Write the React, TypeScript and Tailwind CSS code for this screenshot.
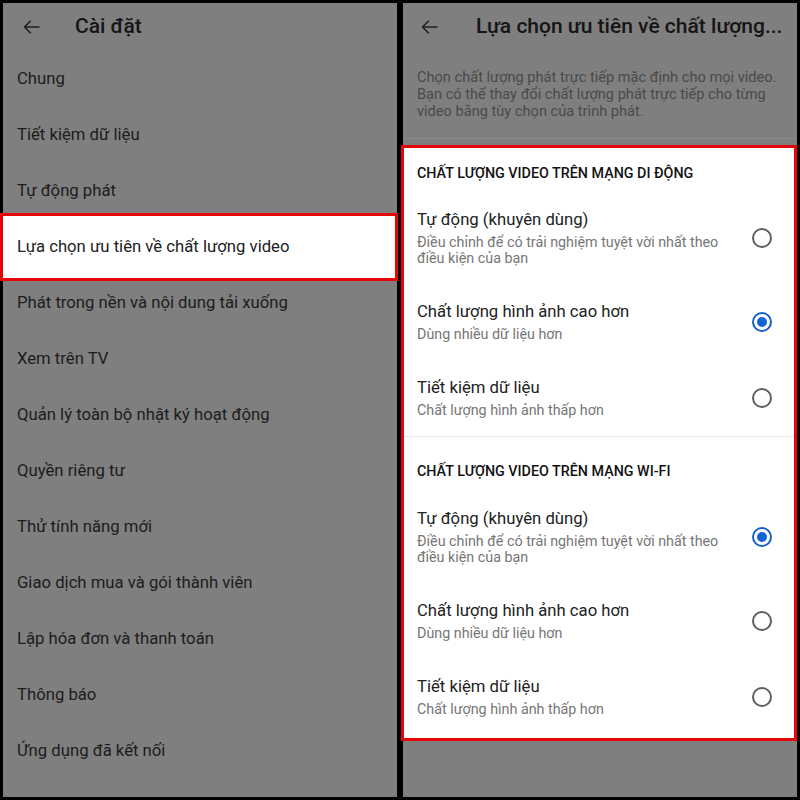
import React from 'react';

const font = { fontFamily: 'Roboto, "Noto Sans", sans-serif' };

const menuItems = [
  'Chung',
  'Tiết kiệm dữ liệu',
  'Tự động phát',
  'Lựa chọn ưu tiên về chất lượng video',
  'Phát trong nền và nội dung tải xuống',
  'Xem trên TV',
  'Quản lý toàn bộ nhật ký hoạt động',
  'Quyền riêng tư',
  'Thử tính năng mới',
  'Giao dịch mua và gói thành viên',
  'Lập hóa đơn và thanh toán',
  'Thông báo',
  'Ứng dụng đã kết nối',
];

type Option = { title: string; sub: string[]; checked: boolean };

const mobile: Option[] = [
  { title: 'Tự động (khuyên dùng)', sub: ['Điều chỉnh để có trải nghiệm tuyệt vời nhất theo', 'điều kiện của bạn'], checked: false },
  { title: 'Chất lượng hình ảnh cao hơn', sub: ['Dùng nhiều dữ liệu hơn'], checked: true },
  { title: 'Tiết kiệm dữ liệu', sub: ['Chất lượng hình ảnh thấp hơn'], checked: false },
];

const wifi: Option[] = [
  { title: 'Tự động (khuyên dùng)', sub: ['Điều chỉnh để có trải nghiệm tuyệt vời nhất theo', 'điều kiện của bạn'], checked: true },
  { title: 'Chất lượng hình ảnh cao hơn', sub: ['Dùng nhiều dữ liệu hơn'], checked: false },
  { title: 'Tiết kiệm dữ liệu', sub: ['Chất lượng hình ảnh thấp hơn'], checked: false },
];

function BackArrow() {
  return (
    <svg width="20" height="20" viewBox="0 0 24 24" fill="none" stroke="#1e1e1e" strokeWidth="1.8" className="shrink-0">
      <path d="M21 12H3.5" />
      <path d="M10.5 4.5L3 12l7.5 7.5" />
    </svg>
  );
}

function Radio({ checked }: { checked: boolean }) {
  return checked ? (
    <div className="w-[20px] h-[20px] rounded-full border-2 border-[#1660c9] flex items-center justify-center shrink-0">
      <div className="w-[10px] h-[10px] rounded-full bg-[#1263d6]" />
    </div>
  ) : (
    <div className="w-[20px] h-[20px] rounded-full border-2 border-[#5f5f5f] shrink-0" />
  );
}

function OptionRow({ opt }: { opt: Option }) {
  return (
    <div className="flex items-center pl-[13px] pr-[22px] pt-[17px] pb-[18px]">
      <div className="flex-1">
        <div className="text-[16.7px] leading-[22px] text-[#212121]">{opt.title}</div>
        <div className="mt-[3px] text-[14.3px] leading-[16px] text-[#767676]">
          {opt.sub.map((s) => (
            <div key={s}>{s}</div>
          ))}
        </div>
      </div>
      <Radio checked={opt.checked} />
    </div>
  );
}

export default function App() {
  return (
    <div className="w-[800px] h-[800px] bg-black p-[3px] flex gap-[6px] overflow-hidden" style={font}>
      {/* left: settings list */}
      <div className="w-[394px] shrink-0 h-full bg-[#7f7f7f] flex flex-col">
        <div className="h-[48px] flex items-center pl-[19px] shrink-0">
          <BackArrow />
          <span className="ml-[33px] text-[21px] font-medium text-[#151515]">Cài đặt</span>
        </div>
        {menuItems.map((item, i) =>
          i === 3 ? (
            <div
              key={item}
              className="relative z-10 -ml-[3px] -mr-[1px] -my-[6px] h-[68px] bg-white border-[3px] border-[#e5060a] flex items-center pl-[14px] text-[16.7px] text-[#222]"
            >
              {item}
            </div>
          ) : (
            <div key={item} className="h-[56px] flex items-center pl-[14px] text-[16.7px] text-[#1c1c1c] shrink-0">
              {item}
            </div>
          )
        )}
      </div>

      {/* right: quality preferences */}
      <div className="flex-1 min-w-0 h-full bg-[#7f7f7f] flex flex-col">
        <div className="h-[48px] flex items-center pl-[17px] pr-[8px] shrink-0">
          <BackArrow />
          <span className="ml-[36px] text-[21px] font-medium text-[#151515] whitespace-nowrap">
            Lựa chọn ưu tiên về chất lượng...
          </span>
        </div>
        <div className="pl-[14px] pr-[8px] pt-[18px] text-[14.6px] leading-[17px] text-[#4a4a4a]">
          Chọn chất lượng phát trực tiếp mặc định cho mọi video. Bạn có thể thay đổi chất lượng phát trực tiếp cho từng
          video bằng tùy chọn của trình phát.
        </div>
        <div className="mt-[18px] h-px bg-[#8c8c8c]" />
        <div className="mt-[6px] -ml-[2px] border-[3px] border-[#e5060a] bg-white">
          <div className="h-[44px] pl-[13px] pt-[17px] text-[14.3px] leading-[16px] font-medium text-[#121212] uppercase">
            Chất lượng video trên mạng di động
          </div>
          {mobile.map((o) => (
            <OptionRow key={o.title} opt={o} />
          ))}
          <div className="h-px bg-[#e6e6e6]" />
          <div className="h-[54px] pl-[13px] pt-[26px] text-[14.3px] leading-[16px] font-medium text-[#121212] uppercase">
            Chất lượng video trên mạng Wi-Fi
          </div>
          {wifi.map((o) => (
            <OptionRow key={o.title} opt={o} />
          ))}
          <div className="h-[3px]" />
        </div>
      </div>
    </div>
  );
}
